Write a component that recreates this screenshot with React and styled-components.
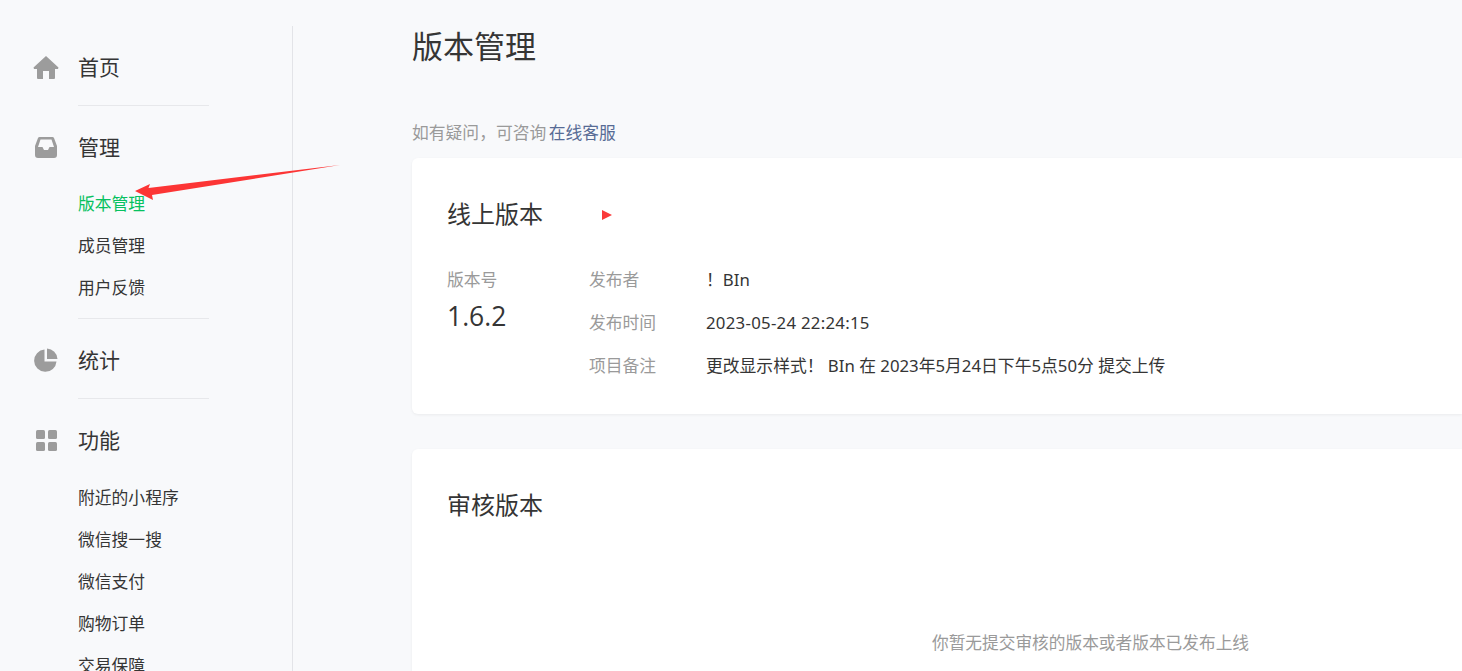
import React from 'react';
import styled, { createGlobalStyle } from 'styled-components';

const GlobalStyle = createGlobalStyle`
  html, body {
    margin: 0;
    height: 100%;
    overflow: hidden;
    background: #f8f9fb;
  }
  body {
    font-family: "Noto Sans", "Noto Sans CJK SC", sans-serif;
    color: #353535;
  }
`;

const Page = styled.div`
  position: relative;
  display: flex;
  width: 1462px;
  height: 671px;
  overflow: hidden;
`;

// Left navigation
const Sidebar = styled.nav`
  width: 293px;
  height: 645px;
  margin-top: 26px;
  padding: 20px 0 0 33px;
  box-sizing: border-box;
  border-right: 1px solid #e3e4e8;
  flex-shrink: 0;
`;

const NavGroup = styled.div`
  width: 176px;
  padding-bottom: ${props => props.$bottom}px;
  margin-bottom: ${props => props.$last ? 0 : 20}px;
  position: relative;

  &::after {
    content: ${props => props.$last ? 'none' : '""'};
    position: absolute;
    left: 45px;
    right: 0;
    bottom: 0;
    height: 1px;
    background: #e7e8eb;
  }
`;

const NavHead = styled.div`
  display: flex;
  align-items: center;
  height: 42px;
  gap: 19px;
  font-size: 21px;
  line-height: 42px;
  color: #353535;
`;

const IconBox = styled.span`
  display: flex;
  width: 26px;
  height: 26px;
  align-items: center;
  justify-content: center;
  flex-shrink: 0;
`;

const SubList = styled.div`
  display: flex;
  flex-direction: column;
  padding: ${props => props.$top}px 0 0 45px;
`;

const SubItem = styled.a`
  height: 42px;
  line-height: 42px;
  font-size: 16.8px;
  color: ${props => props.$active ? '#07c160' : '#353535'};
`;

// Main column
const Main = styled.main`
  flex: 1;
  padding-left: 119px;
  min-width: 0;
`;

const Title = styled.h1`
  margin: 21px 0 0;
  font-size: 31px;
  font-weight: 400;
  line-height: 50px;
  color: #353535;
`;

const Hint = styled.p`
  margin: 49px 0 0;
  font-size: 16.8px;
  line-height: 26px;
  word-spacing: -2px;
  color: #9a9a9a;

  a {
    color: #576b95;
  }
`;

const Card = styled.section`
  background: #fff;
  border-radius: 6px 0 0 6px;
  box-shadow: 0 1px 3px rgba(0, 0, 0, 0.06);
  padding: 0 35px;
  margin-top: ${props => props.$top}px;
  height: ${props => props.$height}px;
`;

const CardTitle = styled.h2`
  display: flex;
  align-items: center;
  margin: 0;
  padding-top: 36px;
  font-size: 24px;
  font-weight: 400;
  line-height: 40px;
  color: #353535;
`;

const PlayMark = styled.span`
  width: 0;
  height: 0;
  margin: 2px 0 0 59px;
  border-left: 10px solid #fa3a3a;
  border-top: 5px solid transparent;
  border-bottom: 5px solid transparent;
`;

const InfoRow = styled.div`
  display: flex;
  margin-top: 34px;
`;

const VersionCol = styled.div`
  width: 142px;
  flex-shrink: 0;
`;

const Label = styled.div`
  font-size: 16.8px;
  line-height: 24px;
  color: #9a9a9a;
`;

const VersionNo = styled.div`
  margin-top: 6px;
  font-family: "Open Sans", "Noto Sans", sans-serif;
  font-size: 26.5px;
  line-height: 36px;
  color: #353535;
`;

const Meta = styled.dl`
  display: grid;
  grid-template-columns: 117px 1fr;
  grid-auto-rows: 43px;
  margin: -2px 0 0;
  font-size: 16.8px;
  line-height: 28px;

  dt { color: #9a9a9a; }
`;

const MetaValue = styled.dd`
  margin: 0;
  color: #353535;
  letter-spacing: ${props => props.$spaced ? '0.27px' : 'normal'};
`;

const Empty = styled.p`
  margin: 104px 0 0 485px;
  font-size: 16.7px;
  line-height: 28px;
  color: #9a9a9a;
  white-space: nowrap;
`;

const ArrowMark = styled.svg`
  position: absolute;
  left: 130px;
  top: 160px;
`;

const iconFill = '#9c9c9c';

const HomeIcon = () => (
  <svg width="26" height="24" viewBox="0 0 26 24">
    <path fill={iconFill} d="M13 1 L25.5 12.6 L25 14 H22 V23 Q22 24 21 24 H16 V16 H10 V24 H5 Q4 24 4 23 V14 H1 L.5 12.6 Z" />
  </svg>
);

const InboxIcon = () => (
  <svg width="22" height="21" viewBox="0 0 22 21">
    <path fill={iconFill} fillRule="evenodd" d="M4.5 0 H17.5 Q18.5 0 19 1 L22 9 V18 Q22 21 19 21 H3 Q0 21 0 18 V9 L3 1 Q3.5 0 4.5 0 Z M5.5 2.5 L3 10 H7.5 L9 13 H13 L14.5 10 H19 L16.5 2.5 Z" />
  </svg>
);

const PieIcon = () => (
  <svg width="24" height="24" viewBox="0 0 24 24">
    <path fill={iconFill} d="M10.5 1.5 V13.5 H22.5 A11.2 11.2 0 1 1 10.5 1.5 Z" />
    <path fill={iconFill} d="M13 0.5 A11 11 0 0 1 23.5 11 H13 Z" />
  </svg>
);

const GridIcon = () => (
  <svg width="21" height="21" viewBox="0 0 21 21">
    <rect fill={iconFill} x="0" y="0" width="9" height="9" rx="1.5" />
    <rect fill={iconFill} x="12" y="0" width="9" height="9" rx="1.5" />
    <rect fill={iconFill} x="0" y="12" width="9" height="9" rx="1.5" />
    <rect fill={iconFill} x="12" y="12" width="9" height="9" rx="1.5" />
  </svg>
);

const groups = [
  { icon: <HomeIcon />, name: '首页', items: [], bottom: 18 },
  { icon: <InboxIcon />, name: '管理', items: ['版本管理', '成员管理', '用户反馈'], bottom: 10, top: 15, active: '版本管理' },
  { icon: <PieIcon />, name: '统计', items: [], bottom: 18 },
  { icon: <GridIcon />, name: '功能', items: ['附近的小程序', '微信搜一搜', '微信支付', '购物订单', '交易保障'], top: 16, last: true },
];

export default function App() {
  return (
    <>
      <GlobalStyle />
      <Page>
        <Sidebar>
          {groups.map(g => (
            <NavGroup key={g.name} $bottom={g.bottom || 0} $last={g.last}>
              <NavHead>
                <IconBox>{g.icon}</IconBox>
                {g.name}
              </NavHead>
              {g.items.length > 0 && (
                <SubList $top={g.top}>
                  {g.items.map(item => (
                    <SubItem key={item} $active={item === g.active}>{item}</SubItem>
                  ))}
                </SubList>
              )}
            </NavGroup>
          ))}
        </Sidebar>

        <Main>
          <Title>版本管理</Title>
          <Hint>如有疑问，可咨询 <a>在线客服</a></Hint>

          <Card $top={12} $height={256}>
            <CardTitle>线上版本<PlayMark /></CardTitle>
            <InfoRow>
              <VersionCol>
                <Label>版本号</Label>
                <VersionNo>1.6.2</VersionNo>
              </VersionCol>
              <Meta>
                <dt>发布者</dt>
                <MetaValue>！BIn</MetaValue>
                <dt>发布时间</dt>
                <MetaValue $spaced>2023-05-24 22:24:15</MetaValue>
                <dt>项目备注</dt>
                <MetaValue>更改显示样式！ BIn 在 2023年5月24日下午5点50分 提交上传</MetaValue>
              </Meta>
            </InfoRow>
          </Card>

          <Card $top={35} $height={300}>
            <CardTitle>审核版本</CardTitle>
            <Empty>你暂无提交审核的版本或者版本已发布上线</Empty>
          </Card>
        </Main>

        <ArrowMark width="215" height="45" viewBox="0 0 215 45">
          <path fill="#fc3535" d="M5 31 L20 24 L18.5 28 L210 5 L22 35 L23 40 Z" />
        </ArrowMark>
      </Page>
    </>
  );
}
